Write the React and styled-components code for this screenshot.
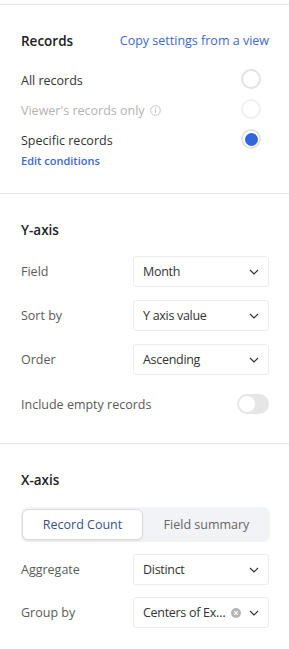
import React from "react";
import styled, { createGlobalStyle } from "styled-components";

const GlobalStyle = createGlobalStyle`
  body {
    margin: 0;
    background: #ffffff;
    font-family: "Open Sans", "Noto Sans", sans-serif;
    color: #333333;
  }
`;

const Panel = styled.div`
  width: 289px;
  padding-top: 4px;
  box-sizing: border-box;
`;

const Section = styled.section`
  border-top: 1px solid #e6e6e6;
  padding: ${p => p.pad || "26px 20px 25px 21px"};
`;

const HeaderRow = styled.div`
  display: flex;
  align-items: center;
  justify-content: space-between;
  height: 20px;
`;

const Title = styled.h3`
  margin: 0;
  font-size: 13.5px;
  font-weight: 600;
  color: #222222;
  line-height: 20px;
`;

const LinkText = styled.span`
  font-size: ${p => p.small ? "11px" : "12.5px"};
  font-weight: ${p => p.small ? 600 : 400};
  color: #3b6ad3;
  line-height: ${p => p.small ? "14px" : "20px"};
  cursor: pointer;
`;

const RadioList = styled.div`
  margin-top: 13px;
  display: flex;
  flex-direction: column;
`;

const RadioRow = styled.div`
  display: flex;
  align-items: center;
  justify-content: space-between;
  height: 30px;
`;

const RowLabel = styled.span`
  font-size: 12.5px;
  color: ${p => p.muted ? "#b3b3b3" : "#333333"};
  display: flex;
  align-items: center;
  gap: 5px;
  padding-top: 3px;
`;

const Radio = styled.span`
  width: 20px;
  height: 20px;
  box-sizing: border-box;
  border-radius: 50%;
  border: 2px solid ${p => p.faded ? "#f0f0f0" : "#e3e3e3"};
  background: #ffffff;
  display: flex;
  align-items: center;
  justify-content: center;
  margin-right: 8px;

  &::after {
    content: "";
    display: ${p => p.checked ? "block" : "none"};
    width: 13px;
    height: 13px;
    border-radius: 50%;
    background: #3366dd;
  }
`;

const Fields = styled.div`
  margin-top: ${p => p.top || 16}px;
  display: flex;
  flex-direction: column;
  gap: ${p => p.gap || 13}px;
`;

const FieldRow = styled.div`
  display: grid;
  grid-template-columns: 112px minmax(0, 1fr);
  align-items: center;
`;

const FieldLabel = styled.span`
  font-size: 12.5px;
  color: #5a5a5a;
`;

const SelectBox = styled.div`
  height: 31px;
  min-width: 0;
  box-sizing: border-box;
  border: 1px solid #ececec;
  border-radius: 3px;
  display: flex;
  align-items: center;
  padding: 0 9px 0 9px;
  gap: 5px;
  font-size: 12.5px;
  letter-spacing: -0.3px;
  color: #333333;
`;

const SelectValue = styled.span`
  flex: 1;
  min-width: 0;
  white-space: nowrap;
`;

const ClearDot = styled.span`
  flex: none;
  width: 10px;
  height: 10px;
  border-radius: 50%;
  background: #b5b5b5;
  display: flex;
  align-items: center;
  justify-content: center;
  margin-right: 3px;
`;

const ToggleRow = styled.div`
  margin-top: 19px;
  display: flex;
  align-items: center;
  justify-content: space-between;
  height: 20px;
`;

const Toggle = styled.span`
  width: 32px;
  height: 20px;
  border-radius: 10px;
  background: #e6e6e6;
  display: flex;
  align-items: center;
  padding: 2px;
  box-sizing: border-box;

  &::before {
    content: "";
    width: 16px;
    height: 16px;
    border-radius: 50%;
    background: #ffffff;
  }
`;

const Segmented = styled.div`
  margin-top: 17px;
  height: 35px;
  box-sizing: border-box;
  background: #f2f3f7;
  border-radius: 7px;
  padding: 2px 0 2px 1px;
  display: grid;
  grid-template-columns: 121px 1fr;
  margin-right: -1px;
`;

const SegTab = styled.span`
  display: flex;
  align-items: center;
  justify-content: center;
  font-size: 12.5px;
  border-radius: 6px;
  color: ${p => p.active ? "#34508e" : "#666666"};
  background: ${p => p.active ? "#ffffff" : "transparent"};
  border: 1px solid ${p => p.active ? "#dcdcdc" : "transparent"};
  box-shadow: ${p => p.active ? "0 1px 2px rgba(0,0,0,0.08)" : "none"};
`;

const Chevron = () => (
  <svg width="10" height="6" viewBox="0 0 10 6" fill="none" style={{ flex: "none" }}>
    <path d="M1 1l4 4 4-4" stroke="#333" strokeWidth="1.2" />
  </svg>
);

const InfoIcon = () => (
  <svg width="11" height="11" viewBox="0 0 11 11" fill="none">
    <circle cx="5.5" cy="5.5" r="4.8" stroke="#c0c0c0" strokeWidth="0.9" />
    <path d="M5.5 4.7v3.3" stroke="#c0c0c0" strokeWidth="1" />
    <circle cx="5.5" cy="3.2" r="0.6" fill="#c0c0c0" />
  </svg>
);

const Select = ({ value, clearable }) => (
  <SelectBox>
    <SelectValue>{value}</SelectValue>
    {clearable && (
      <ClearDot>
        <svg width="6" height="6" viewBox="0 0 6 6">
          <path d="M1.2 1.2l3.6 3.6M4.8 1.2L1.2 4.8" stroke="#fff" strokeWidth="1.1" />
        </svg>
      </ClearDot>
    )}
    <Chevron />
  </SelectBox>
);

const Field = ({ label, value, clearable }) => (
  <FieldRow>
    <FieldLabel>{label}</FieldLabel>
    <Select value={value} clearable={clearable} />
  </FieldRow>
);

export default function App() {
  return (
    <Panel>
      <GlobalStyle />
      <Section>
        <HeaderRow>
          <Title>Records</Title>
          <LinkText>Copy settings from a view</LinkText>
        </HeaderRow>
        <RadioList>
          <RadioRow>
            <RowLabel>All records</RowLabel>
            <Radio />
          </RadioRow>
          <RadioRow>
            <RowLabel muted>Viewer's records only <InfoIcon /></RowLabel>
            <Radio faded />
          </RadioRow>
          <RadioRow>
            <RowLabel>Specific records</RowLabel>
            <Radio checked />
          </RadioRow>
          <LinkText small>Edit conditions</LinkText>
        </RadioList>
      </Section>

      <Section pad="26px 20px 29px 21px">
        <Title>Y-axis</Title>
        <Fields>
          <Field label="Field" value="Month" />
          <Field label="Sort by" value="Y axis value" />
          <Field label="Order" value="Ascending" />
        </Fields>
        <ToggleRow>
          <FieldLabel>Include empty records</FieldLabel>
          <Toggle />
        </ToggleRow>
      </Section>

      <Section pad="26px 20px 20px 21px">
        <Title>X-axis</Title>
        <Segmented>
          <SegTab active>Record Count</SegTab>
          <SegTab>Field summary</SegTab>
        </Segmented>
        <Fields top={12} gap={12}>
          <Field label="Aggregate" value="Distinct" />
          <Field label="Group by" value="Centers of Ex…" clearable />
        </Fields>
      </Section>
    </Panel>
  );
}
